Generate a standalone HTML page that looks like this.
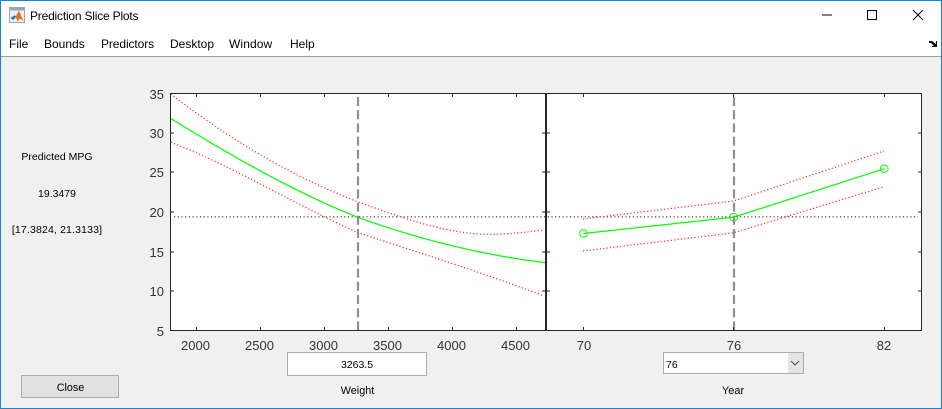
<!DOCTYPE html>
<html><head><meta charset="utf-8"><style>
html,body{margin:0;padding:0;width:942px;height:409px;overflow:hidden;background:#f0f0f0}
.t{position:absolute;font-family:"Liberation Sans",sans-serif;white-space:nowrap;color:#000;line-height:14px}
.u{font-size:11px;transform:translateX(-50%)}
.m{font-size:12px;top:37px}
.n{font-size:13px;color:#333}
.b{position:absolute;box-sizing:border-box;border:1px solid #adadad}
</style></head><body>
<div style="position:absolute;left:0;top:0;width:942px;height:56px;background:#fff"></div>
<div style="position:absolute;left:0;top:56px;width:942px;height:1px;background:#a0a0a0"></div>
<svg width="942" height="409" style="position:absolute;left:0;top:0">
<g>
<rect x="9.5" y="7.5" width="15" height="15" fill="#eef2f6" stroke="#a5a5a5"/>
<rect x="10" y="8" width="14" height="2.5" fill="#8fa9c4"/>
<path d="M10.5 18 L14 15.5 L16 16 L19 10.5 L23.5 21 L20 18.5 L17.5 21.5 L16 17.5 Z" fill="#e8701c"/>
<path d="M10.5 18 L14 15.5 L16 16 L15 18.5 L13 20 Z" fill="#3f7fb5"/>
</g>
<path d="M822 15H832" stroke="#000" fill="none"/>
<rect x="867.5" y="10.5" width="9" height="9" fill="none" stroke="#000"/>
<path d="M913 10L923 20M923 10L913 20" stroke="#000" stroke-width="1" fill="none"/>
<path d="M929 41h3l4 3v-3h1v6h-5v-1h2l-3-3h-2z" fill="#111"/>

<rect x="170" y="94" width="751" height="236" fill="#fff"/>
<path d="M174 216.8H918" stroke="#555" stroke-width="1.3" stroke-dasharray="1.2 2.5" fill="none"/>

<g fill="none" stroke="#ff2020" stroke-width="1.2" stroke-dasharray="1.2 2.2">
<path d="M170.7 94 C233 142 295.4 178 357.7 201.7 C401.8 217.6 446 234.3 490 234.3 C508 234.3 526 232.4 544 229.7"/>
<path d="M170.7 142.3 C233 166 295.4 205 357.7 232.5 C420 253 482 272.5 544 296"/>
<path d="M583 219 L733.7 201 L884 151"/>
<path d="M583 251 L733.7 232.7 L884 186.7"/>
</g>
<g fill="none" stroke="#00ff00" stroke-width="1.2">
<path d="M170 118 C232.6 156.8 295.1 192.3 357.7 217.3 C420.4 239.9 483 255.2 545.7 262.7"/>
<path d="M583.5 233.5 L733.7 217.2 L884.3 168.7"/>
</g>
<g fill="none" stroke="#22f022" stroke-width="1.1">
<circle cx="583.5" cy="233.5" r="3.8"/>
<circle cx="733.7" cy="217.2" r="3.8"/>
<circle cx="884.3" cy="168.7" r="3.8"/>
</g>
<g fill="none" stroke="#909090" stroke-width="2.2" stroke-dasharray="9 4.2">
<path d="M358 97V330"/>
<path d="M734 97V330"/>
</g>
<g fill="none" stroke="#262626" stroke-width="1" shape-rendering="crispEdges">
<rect x="170.5" y="93.5" width="751" height="237"/>
<path d="M546 94V330" stroke-width="2"/>
<path d="M171 133h3M171 172h3M171 212h3M171 252h3M171 291h3"/>
<path d="M542 133h3M542 172h3M542 212h3M542 252h3M542 291h3"/>
<path d="M547 133h3M547 172h3M547 212h3M547 252h3M547 291h3"/>
<path d="M918 133h3M918 172h3M918 212h3M918 252h3M918 291h3"/>
<path d="M196.5 94v3M260.5 94v3M324.5 94v3M388.5 94v3M452.5 94v3M516.5 94v3M583.5 94v3M733.5 94v3M884.5 94v3"/>
<path d="M196.5 327v3M260.5 327v3M324.5 327v3M388.5 327v3M452.5 327v3M516.5 327v3M583.5 327v3M733.5 327v3M884.5 327v3"/>
</g>
<path d="M0 0.5H942M0.5 0V409M941.5 0V409M0 408.5H942" stroke="#1883d7" stroke-width="1" fill="none" shape-rendering="crispEdges"/>
</svg>

<div class="t" style="font-size:12px;left:30px;top:9px;letter-spacing:-.2px">Prediction Slice Plots</div>
<div class="t m" style="left:9px">File</div>
<div class="t m" style="left:44px">Bounds</div>
<div class="t m" style="left:101px;letter-spacing:-.1px">Predictors</div>
<div class="t m" style="left:170px">Desktop</div>
<div class="t m" style="left:229px;letter-spacing:.1px">Window</div>
<div class="t m" style="left:290px">Help</div>

<div class="t u" style="left:57px;top:150px;font-size:10.5px">Predicted MPG</div>
<div class="t u" style="left:57px;top:187px;font-size:10.5px">19.3479</div>
<div class="t u" style="left:57px;top:223px;font-size:10.5px;letter-spacing:.15px">[17.3824, 21.3133]</div>

<div class="t n" style="right:778px;top:88px">35</div>
<div class="t n" style="right:778px;top:127px">30</div>
<div class="t n" style="right:778px;top:166px">25</div>
<div class="t n" style="right:778px;top:206px">20</div>
<div class="t n" style="right:778px;top:246px">15</div>
<div class="t n" style="right:778px;top:285px">10</div>
<div class="t n" style="right:778px;top:325px">5</div>
<div class="t u n" style="left:195.5px;top:339px">2000</div>
<div class="t u n" style="left:259.5px;top:339px">2500</div>
<div class="t u n" style="left:323.5px;top:339px">3000</div>
<div class="t u n" style="left:387.5px;top:339px">3500</div>
<div class="t u n" style="left:451.5px;top:339px">4000</div>
<div class="t u n" style="left:515.5px;top:339px">4500</div>
<div class="t u n" style="left:584px;top:339px">70</div>
<div class="t u n" style="left:734px;top:339px">76</div>
<div class="t u n" style="left:884px;top:339px">82</div>

<div class="b" style="left:287px;top:352px;width:140px;height:24px;background:#fff"></div>
<div class="t u" style="left:357px;top:358px;font-size:10.5px">3263.5</div>
<div class="t u" style="left:357.5px;top:384px;font-size:10.8px">Weight</div>

<div class="b" style="left:663px;top:352px;width:141px;height:22px;background:#fff"></div>
<div style="position:absolute;left:788px;top:353px;width:15px;height:20px;background:#e4e4e4"></div>
<svg width="12" height="8" style="position:absolute;left:790px;top:360px"><path d="M1 1L5 5L9 1" fill="none" stroke="#555" stroke-width="1"/></svg>
<div class="t" style="left:666px;top:358px;font-size:10.5px">76</div>
<div class="t u" style="left:733px;top:384px;font-size:11px">Year</div>

<div class="b" style="left:21px;top:375px;width:98px;height:23px;background:#e1e1e1"></div>
<div class="t u" style="left:70.5px;top:381px;font-size:10.8px">Close</div>
</body></html>
